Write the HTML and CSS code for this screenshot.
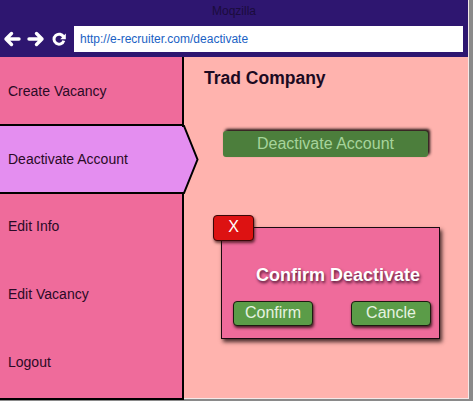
FILE: index.html
```html
<!DOCTYPE html>
<html>
<head>
<meta charset="utf-8">
<link rel="stylesheet" href="styles.css">
</head>
<body>
<div class="window">
  <header class="chrome">
    <div class="title">Moqzilla</div>
    <div class="nav">
      <div class="icons">
        <svg width="18" height="16" viewBox="0 0 18 16"><path d="M16 8H3M8.5 2.5L3 8l5.5 5.5" fill="none" stroke="#fff" stroke-width="3.4" stroke-linecap="round" stroke-linejoin="round"/></svg>
        <svg width="18" height="16" viewBox="0 0 18 16"><path d="M2 8h13M9.5 2.5L15 8l-5.5 5.5" fill="none" stroke="#fff" stroke-width="3.4" stroke-linecap="round" stroke-linejoin="round"/></svg>
        <svg width="16" height="16" viewBox="0 0 16 16"><path d="M12.6 6.2A5 5 0 1 0 12.8 9.6" fill="none" stroke="#fff" stroke-width="3"/><path d="M14.8 2.6v5.6H9.2z" fill="#fff"/></svg>
      </div>
      <div class="url">http://e-recruiter.com/deactivate</div>
    </div>
  </header>
  <div class="body">
    <nav class="sidebar">
      <div class="item sep">Create Vacancy</div>
      <div class="item active sep">Deactivate Account
        <svg class="tip" width="18" height="69" viewBox="0 0 18 69"><polygon points="0,1 2,1 15.5,34.5 2,68 0,68" fill="#e48ef0"/><polyline points="0,1 2,1 15.5,34.5 2,68 0,68" fill="none" stroke="#000" stroke-width="2"/></svg>
      </div>
      <div class="item low">Edit Info</div>
      <div class="item low">Edit Vacancy</div>
      <div class="item low last">Logout</div>
    </nav>
    <main class="main">
      <h1 class="company">Trad Company</h1>
      <button class="deact">Deactivate Account</button>
      <div class="dialog">
        <button class="close">X</button>
        <h2 class="dtitle">Confirm Deactivate</h2>
        <div class="actions">
          <button class="gbtn">Confirm</button>
          <button class="gbtn">Cancle</button>
        </div>
      </div>
    </main>
  </div>
</div>
</body>
</html>
```

FILE: styles.css
```css
* { box-sizing: border-box; }
html, body { margin: 0; padding: 0; }
body {
  width: 473px;
  height: 401px;
  background: #8a8a8a;
  font-family: "Liberation Sans", Arial, sans-serif;
  overflow: hidden;
}
.window {
  width: 469px;
  height: 399px;
  border-right: 1px solid #f4e8e8;
  border-bottom: 1px solid #f4e8e8;
  display: flex;
  flex-direction: column;
  background: #ffb3ae;
}
.chrome {
  background: #2e1670;
  height: 57px;
  flex: none;
}
.title {
  height: 23px;
  line-height: 22px;
  text-align: center;
  font-size: 12px;
  color: #1b0c3c;
}
.nav {
  display: flex;
  align-items: center;
  height: 29px;
  padding-top: 2px;
}
.icons {
  display: flex;
  align-items: center;
  gap: 6px;
  width: 74px;
  padding-left: 3px;
}
.url {
  width: 389px;
  height: 26px;
  background: #fff;
  color: #1a62c4;
  font-size: 12px;
  line-height: 26px;
  padding-left: 6px;
}
.body {
  display: flex;
  flex: 1;
}
.sidebar {
  width: 185px;
  flex: none;
  display: flex;
  flex-direction: column;
}
.item {
  position: relative;
  height: 68px;
  flex: none;
  background: #ef6b9b;
  border-right: 2px solid #000;
  width: 184px;
  display: flex;
  align-items: center;
  padding-left: 8px;
  font-size: 14px;
  color: #2a0a26;
}
.item.sep { border-bottom: 2px solid #000; height: 68px; }
.item:first-child { height: 69px; }
.item.low { padding-bottom: 4px; }
.item.last { border-bottom: 2px solid #000; height: 70px; }
.item.active {
  background: #e48ef0;
  border-right: none;
  width: 182px;
}
.tip {
  position: absolute;
  left: 182px;
  top: -1px;
  overflow: visible;
}
.main {
  flex: 1;
  padding: 12px 0 0 19px;
}
.company {
  margin: 0;
  font-size: 17.5px;
  line-height: 18px;
  font-weight: bold;
  color: #1c0a22;
}
.deact {
  display: block;
  margin: 44px 0 0 19px;
  width: 205px;
  height: 26px;
  border: none;
  border-radius: 3px;
  background: #4c7e3c;
  color: #a6d49b;
  font-family: inherit;
  font-size: 16px;
  padding: 0;
  box-shadow: 2px -2px 3px #1b1010;
}
.dialog {
  position: relative;
  margin: 70px 0 0 17px;
  width: 219px;
  height: 112px;
  background: #ef6b9b;
  border: 1px solid #1a0a10;
  box-shadow: 2px 3px 4px rgba(40, 20, 20, 0.85);
  padding: 0 8px 0 11px;
}
.close {
  position: absolute;
  left: -9px;
  top: -13px;
  width: 41px;
  height: 26px;
  background: #dd1212;
  border: 1px solid #3a0808;
  border-radius: 4px;
  color: #fff;
  font-family: inherit;
  font-size: 16px;
  padding: 0 0 2px;
  box-shadow: 1px 2px 3px rgba(40, 10, 10, 0.7);
}
.dtitle {
  margin: 36px 0 0;
  text-align: center;
  font-size: 18px;
  line-height: 22px;
  font-weight: bold;
  color: #fff;
  text-shadow: 1px 2px 3px #4a1030;
  padding-left: 12px;
}
.actions {
  display: flex;
  justify-content: space-between;
  margin-top: 15px;
}
.gbtn {
  width: 80px;
  height: 25px;
  background: #5b9c48;
  border: 1px solid #1e1a10;
  border-radius: 4px;
  color: #e6f3e0;
  font-family: inherit;
  font-size: 16px;
  padding: 0 0 1px;
  box-shadow: 1px 2px 3px rgba(30, 10, 10, 0.8);
}
```
